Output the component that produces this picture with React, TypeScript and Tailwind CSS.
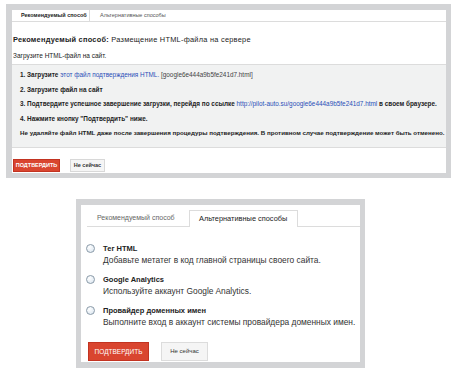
import React from 'react';

const font = "font-['Liberation_Sans',Arial,sans-serif]";

const Radio: React.FC = () => (
  <span className="mt-[1px] h-[9px] w-[9px] shrink-0 rounded-full border border-[#8a9aa8] bg-[radial-gradient(circle_at_35%_30%,#ffffff,#d7e3ee)]" />
);

const options = [
  { title: 'Тег HTML', desc: 'Добавьте метатег в код главной страницы своего сайта.' },
  { title: 'Google Analytics', desc: 'Используйте аккаунт Google Analytics.' },
  { title: 'Провайдер доменных имен', desc: 'Выполните вход в аккаунт системы провайдера доменных имен.' },
];

const App: React.FC = () => {
  return (
    <div className={`h-[375px] w-[456px] bg-white ${font}`}>
      {/* Recommended method panel */}
      <div className="ml-[6px] pt-[4px]">
        <div className="w-[445px] bg-[#d3d4d6] pb-[5px] pl-[6px] pr-[5px] pt-[6px]">
          <div className="bg-white">
            <div className="flex h-[12px] whitespace-nowrap border-b border-[#dcdcdc] text-[5.5px] leading-[11px]">
              <div className="w-[78px] border-r border-[#dcdcdc] pl-[9px] font-bold text-[#222]">Рекомендуемый способ</div>
              <div className="pl-[10px] text-[#555]">Альтернативные способы</div>
            </div>
            <div className="whitespace-nowrap px-[1px] pt-[13px] text-[7.4px] leading-[10px] tracking-[0.25px] text-[#222]">
              <span className="font-bold">Рекомендуемый способ:</span> Размещение HTML-файла на сервере
            </div>
            <div className="px-[1px] pt-[6px] text-[6.5px] leading-[10px] text-[#222]">Загрузите HTML-файл на сайт.</div>
            <div className="mt-[3px] flex h-[84px] flex-col gap-[5px] whitespace-nowrap border-y border-[#dcdcdc] bg-[#f1f2f2] pl-[8px] pt-[5px] text-[6.4px] font-bold leading-[9.5px] text-[#222]">
              <div>
                1. Загрузите <span className="font-normal text-[#2a4fb8]">этот файл подтверждения HTML.</span>{' '}
                <span className="font-normal text-[#444]">[google6e444a9b5fe241d7.html]</span>
              </div>
              <div>2. Загрузите файл на сайт</div>
              <div>
                3. Подтвердите успешное завершение загрузки, перейдя по ссылке{' '}
                <span className="font-normal text-[#2a4fb8]">http://pilot-auto.su/google6e444a9b5fe241d7.html</span> в своем браузере.
              </div>
              <div>4. Нажмите кнопку "Подтвердить" ниже.</div>
              <div className="text-[6.2px]">Не удаляйте файл HTML даже после завершения процедуры подтверждения. В противном случае подтверждение может быть отменено.</div>
            </div>
            <div className="flex gap-[10px] pb-[1px] pl-[1px] pt-[11px]">
              <button className="h-[13px] w-[47px] border border-[#c23321] bg-[#d9452f] text-[5.5px] font-bold text-white">ПОДТВЕРДИТЬ</button>
              <button className="h-[13px] w-[35px] border border-[#d8d8d8] bg-[#f5f5f5] text-[5.5px] font-bold text-[#333]">Не сейчас</button>
            </div>
          </div>
        </div>
      </div>

      {/* Alternative methods panel */}
      <div className="ml-[76px] mt-[21px]">
        <div className="w-[289px] bg-[#d3d4d6] px-[5px] pb-[6px] pt-[6px]">
          <div className="h-[157px] bg-white">
            <div className="flex whitespace-nowrap pl-[6px] pt-[5px] leading-[16px]">
              <div className="w-[102px] border-b border-[#dcdcdc] pl-[10px] text-[7px] text-[#666]">Рекомендуемый способ</div>
              <div className="w-[109px] border-x border-t border-[#dcdcdc] pl-[9px] text-[7.4px] text-[#222]">Альтернативные способы</div>
              <div className="flex-1 border-b border-[#dcdcdc]" />
            </div>
            <div className="flex flex-col gap-[9px] pl-[5px] pt-[16px]">
              {options.map((o) => (
                <div key={o.title} className="flex gap-[8px]">
                  <Radio />
                  <div className="flex flex-col whitespace-nowrap">
                    <span className="text-[7.5px] font-bold leading-[12px] text-[#222]">{o.title}</span>
                    <span className="text-[8.4px] leading-[10px] text-[#333]">{o.desc}</span>
                  </div>
                </div>
              ))}
            </div>
            <div className="flex gap-[12px] pl-[7px] pt-[15px]">
              <button className="h-[19px] w-[61px] border border-[#c23321] bg-[#d9452f] text-[6.5px] text-white">ПОДТВЕРДИТЬ</button>
              <button className="h-[19px] w-[47px] border border-[#dcdcdc] bg-[#f5f5f5] text-[6px] text-[#333]">Не сейчас</button>
            </div>
          </div>
        </div>
      </div>
    </div>
  );
};

export default App;
